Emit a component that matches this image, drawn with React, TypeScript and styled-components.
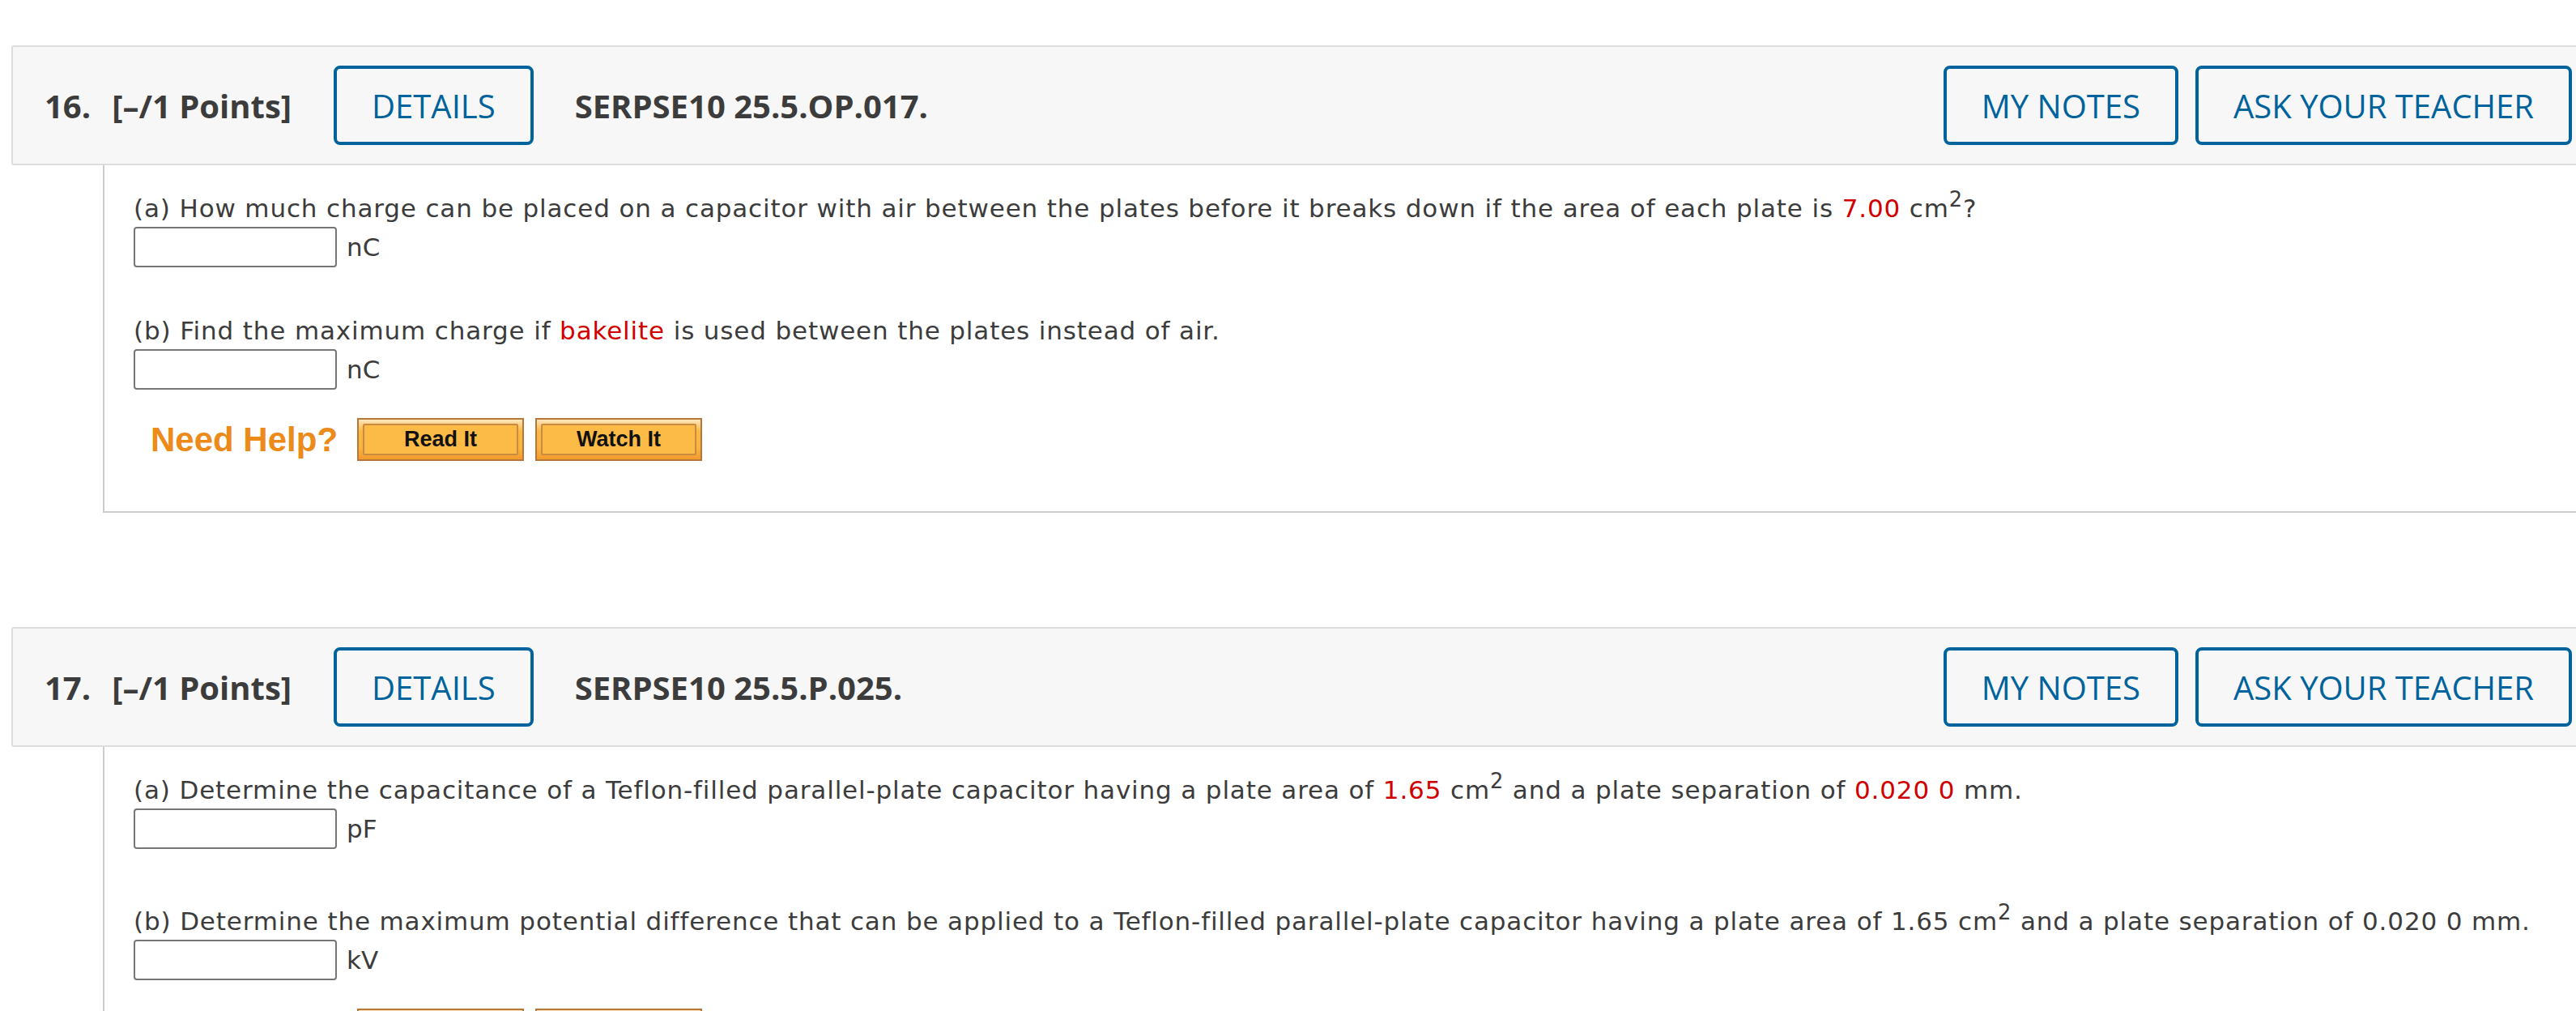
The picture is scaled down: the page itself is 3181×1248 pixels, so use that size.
import React from "react";
import styled, { createGlobalStyle } from "styled-components";

type Part = {
  label: string;
  text: React.ReactNode;
  unit: string;
};

type Question = {
  num: number;
  code: string;
  parts: Part[];
};

const Red = styled.span`
  color: #d10000;
`;

const Sup = styled.sup`
  font-size: 0.83em;
  vertical-align: 13px;
`;

const questions: Question[] = [
  {
    num: 16,
    code: "SERPSE10 25.5.OP.017.",
    parts: [
      {
        label: "(a)",
        text: (
          <>
            How much charge can be placed on a capacitor with air between the
            plates before it breaks down if the area of each plate is{" "}
            <Red>7.00</Red> cm<Sup>2</Sup>?
          </>
        ),
        unit: "nC",
      },
      {
        label: "(b)",
        text: (
          <>
            Find the maximum charge if <Red>bakelite</Red> is used between the
            plates instead of air.
          </>
        ),
        unit: "nC",
      },
    ],
  },
  {
    num: 17,
    code: "SERPSE10 25.5.P.025.",
    parts: [
      {
        label: "(a)",
        text: (
          <>
            Determine the capacitance of a Teflon-filled parallel-plate
            capacitor having a plate area of <Red>1.65</Red> cm<Sup>2</Sup> and
            a plate separation of <Red>0.020 0</Red> mm.
          </>
        ),
        unit: "pF",
      },
      {
        label: "(b)",
        text: (
          <>
            Determine the maximum potential difference that can be applied to a
            Teflon-filled parallel-plate capacitor having a plate area of 1.65
            cm<Sup>2</Sup> and a plate separation of 0.020 0 mm.
          </>
        ),
        unit: "kV",
      },
    ],
  },
];

const App = () => {
  return (
    <>
      <GlobalStyle />
      <StyledPage>
        {questions.map((q) => (
          <StyledQuestion key={q.num}>
            <StyledHeader>
              <StyledNum>{q.num}.</StyledNum>
              <StyledPoints>[–/1 Points]</StyledPoints>
              <StyledOutlineButton>DETAILS</StyledOutlineButton>
              <StyledCode>{q.code}</StyledCode>
              <StyledHeaderRight>
                <StyledOutlineButton>MY NOTES</StyledOutlineButton>
                <StyledOutlineButton>ASK YOUR TEACHER</StyledOutlineButton>
              </StyledHeaderRight>
            </StyledHeader>
            <StyledBody>
              {q.parts.map((p) => (
                <StyledPart key={p.label}>
                  <StyledPrompt>
                    {p.label} {p.text}
                  </StyledPrompt>
                  <StyledAnswerRow>
                    <StyledInput type="text" />
                    <StyledUnit>{p.unit}</StyledUnit>
                  </StyledAnswerRow>
                </StyledPart>
              ))}
              <StyledHelp>
                <StyledHelpLabel>Need Help?</StyledHelpLabel>
                <StyledHelpButton>
                  <span>Read It</span>
                </StyledHelpButton>
                <StyledHelpButton>
                  <span>Watch It</span>
                </StyledHelpButton>
              </StyledHelp>
            </StyledBody>
          </StyledQuestion>
        ))}
      </StyledPage>
    </>
  );
};

export default App;

const GlobalStyle = createGlobalStyle`
  html, body {
    margin: 0;
    padding: 0;
    background: #ffffff;
    overflow: hidden;
  }
`;

const StyledPage = styled.div`
  padding: 56px 0 0 14px;
  display: flex;
  flex-direction: column;
  gap: 141px;
`;

const StyledQuestion = styled.div`
  display: flex;
  flex-direction: column;
`;

const StyledHeader = styled.div`
  display: flex;
  align-items: center;
  background: #f7f7f7;
  border: 2px solid #dddddd;
  border-right: none;
  border-radius: 3px 0 0 3px;
  padding: 23px 5px 23px 39px;
  font-family: "Open Sans", "Liberation Sans", sans-serif;
  font-size: 40px;
  color: #3c3c3c;
`;

const StyledNum = styled.span`
  font-weight: 700;
  margin-right: 26px;
`;

const StyledPoints = styled.span`
  font-weight: 700;
  margin-right: 52px;
`;

const StyledCode = styled.span`
  font-weight: 700;
  margin-left: 51px;
`;

const StyledHeaderRight = styled.div`
  margin-left: auto;
  display: flex;
  gap: 21px;
`;

const StyledOutlineButton = styled.button`
  height: 98px;
  padding: 0 43px;
  background: transparent;
  border: 4px solid #00639c;
  border-radius: 8px;
  color: #00639c;
  font-family: "Open Sans", "Liberation Sans", sans-serif;
  font-size: 40px;
  font-weight: 400;
  cursor: pointer;
`;

const StyledBody = styled.div`
  margin-left: 113px;
  border-left: 2px solid #cccccc;
  border-bottom: 2px solid #cccccc;
  padding: 22px 0 62px 36px;
  font-family: "DejaVu Sans", Verdana, sans-serif;
  font-size: 31px;
  letter-spacing: 0.85px;
  color: #3c3c3c;
`;

const StyledPart = styled.div`
  & + & {
    margin-top: 58px;
  }
`;

const StyledPrompt = styled.div`
  line-height: 40px;
  white-space: nowrap;
`;

const StyledAnswerRow = styled.div`
  display: flex;
  align-items: center;
  gap: 12px;
  margin-top: 3px;
`;

const StyledInput = styled.input`
  box-sizing: border-box;
  width: 251px;
  height: 50px;
  border: 2px solid #767676;
  border-radius: 4px;
  background: #ffffff;
  outline: none;
  font-size: 26px;
`;

const StyledUnit = styled.span`
  line-height: 40px;
  letter-spacing: 0;
`;

const StyledHelp = styled.div`
  display: flex;
  align-items: center;
  margin: 35px 0 0 21px;
`;

const StyledHelpLabel = styled.span`
  font-family: "Liberation Sans", Arial, sans-serif;
  font-size: 42px;
  font-weight: 700;
  letter-spacing: 0;
  color: #ec8a1a;
  margin-right: 24px;
`;

const StyledHelpButton = styled.button`
  box-sizing: border-box;
  width: 206px;
  height: 53px;
  padding: 5px;
  margin-right: 14px;
  border: 2px solid #b5783a;
  background: linear-gradient(
    #fde6bc 0%,
    #fbb845 28%,
    #f9b440 72%,
    #f39a2c 100%
  );
  cursor: pointer;
  display: flex;

  span {
    flex: 1;
    display: flex;
    align-items: center;
    justify-content: center;
    border: 2px solid #c98b42;
    border-radius: 2px;
    background: #fbbb46;
    font-family: "Liberation Sans", Arial, sans-serif;
    font-size: 27px;
    font-weight: 700;
    color: #111111;
  }
`;
